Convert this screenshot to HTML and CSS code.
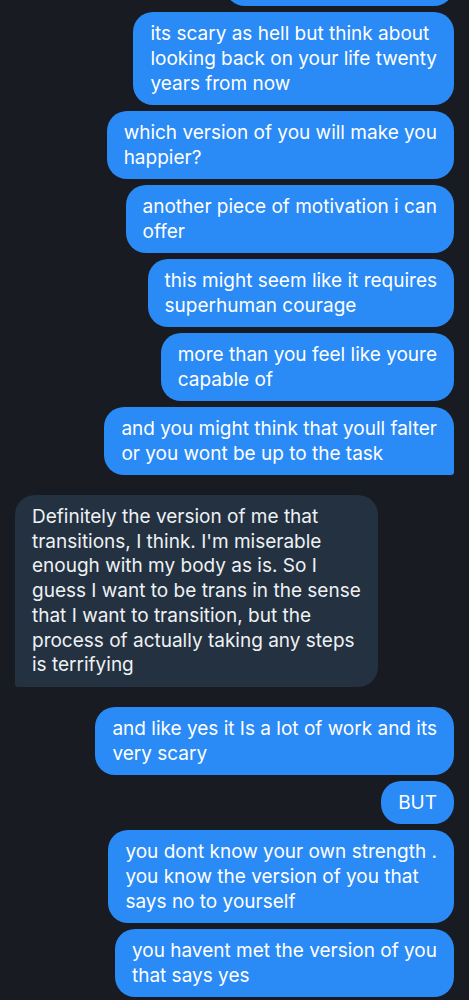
FILE: index.html
```html
<!DOCTYPE html>
<html lang="en">

<head>
    <meta charset="UTF-8">
    <meta name="viewport" content="width=device-width, initial-scale=1.0">
    <title>Messages</title>
    <link rel="stylesheet" href="styles.css">
</head>

<body>
    <div class="chat">
        <div class="group sent">
            <div class="bubble cut"></div>
            <div class="bubble">its scary as hell but think about<br>looking back on your life twenty<br>years from now</div>
            <div class="bubble">which version of you will make you<br>happier?</div>
            <div class="bubble">another piece of motivation i can<br>offer</div>
            <div class="bubble">this might seem like it requires<br>superhuman courage</div>
            <div class="bubble">more than you feel like youre<br>capable of</div>
            <div class="bubble last">and you might think that youll falter<br>or you wont be up to the task</div>
        </div>

        <div class="group received">
            <div class="bubble last">Definitely the version of me that<br>transitions, I think. I'm miserable<br>enough with my body as is. So I<br>guess I want to be trans in the sense<br>that I want to transition, but the<br>process of actually taking any steps<br>is terrifying</div>
        </div>

        <div class="group sent">
            <div class="bubble">and like yes it Is a lot of work and its<br>very scary</div>
            <div class="bubble">BUT</div>
            <div class="bubble">you dont know your own strength .<br>you know the version of you that<br>says no to yourself</div>
            <div class="bubble">you havent met the version of you<br>that says yes</div>
        </div>
    </div>
</body>

</html>
```

FILE: styles.css
```css
body {
    margin: 0;
    background-color: #181c22;
    font-family: Inter, "Noto Sans", sans-serif;
    color: #fff;
    overflow: hidden;
}

.chat {
    display: flex;
    flex-direction: column;
    gap: 20px;
    padding: 0 15px;
    margin-top: -37px;
}

.group {
    display: flex;
    flex-direction: column;
    gap: 6px;
}

.sent {
    align-items: flex-end;
}

.received {
    align-items: flex-start;
}

.bubble {
    padding: 9px 17px;
    border-radius: 20px;
    font-size: 19px;
    line-height: 25px;
    white-space: nowrap;
}

.sent .bubble {
    background-color: #2a8af6;
}

.received .bubble {
    background-color: #243140;
    color: #eef1f4;
    padding: 10px 17px 9px;
    line-height: 24.7px;
}

.sent .bubble.last {
    border-bottom-right-radius: 3px;
}

.received .bubble.last {
    border-bottom-left-radius: 3px;
}

.bubble.cut {
    width: 195px;
    height: 25px;
}
```
